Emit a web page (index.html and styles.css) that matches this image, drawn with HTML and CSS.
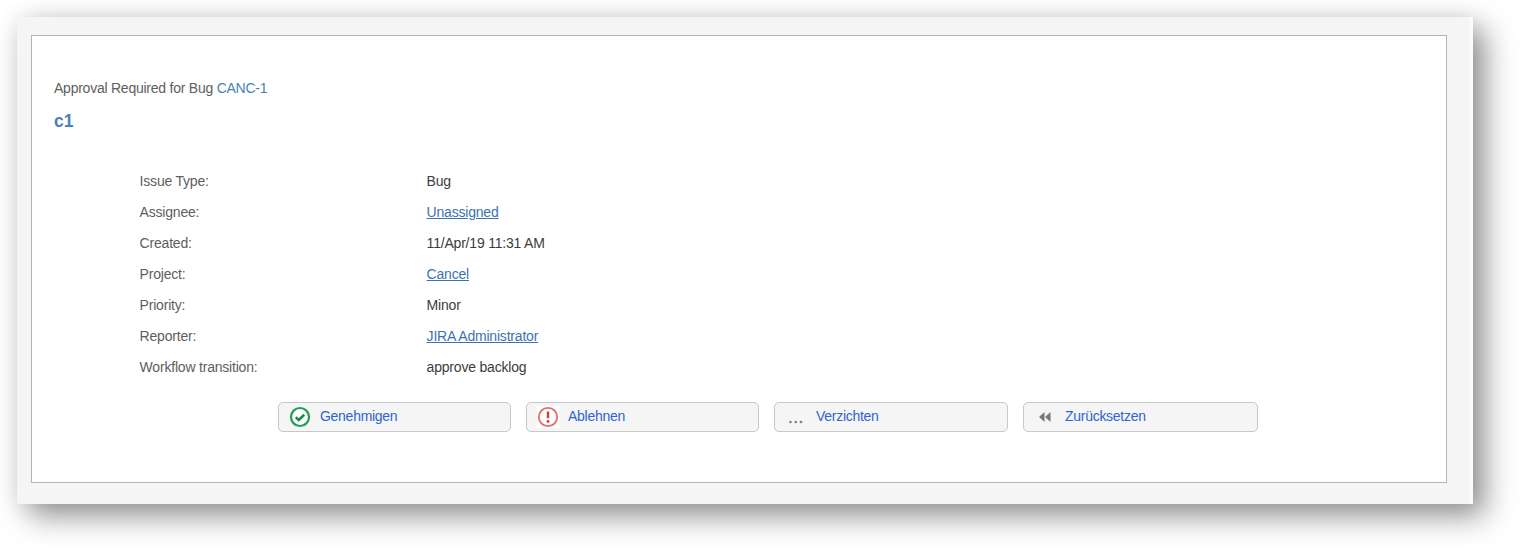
FILE: index.html
```html
<!DOCTYPE html>
<html lang="en">
<head>
<meta charset="utf-8">
<title>Approval Required</title>
<link rel="stylesheet" href="styles.css">
</head>
<body>
<div class="frame">
  <div class="card">
    <p class="lead">Approval Required for Bug <a class="plain" href="#">CANC-1</a></p>
    <h1 class="title"><a class="plain" href="#">c1</a></h1>
    <dl class="fields">
      <dt>Issue Type:</dt><dd>Bug</dd>
      <dt>Assignee:</dt><dd><a href="#">Unassigned</a></dd>
      <dt>Created:</dt><dd>11/Apr/19 11:31 AM</dd>
      <dt>Project:</dt><dd><a href="#">Cancel</a></dd>
      <dt>Priority:</dt><dd>Minor</dd>
      <dt>Reporter:</dt><dd><a href="#">JIRA Administrator</a></dd>
      <dt>Workflow transition:</dt><dd>approve backlog</dd>
    </dl>
    <div class="actions">
      <a class="btn btn-a" href="#">
        <svg class="icon" width="22" height="22" viewBox="0 0 22 22"><circle cx="11" cy="11" r="9" fill="#fff" stroke="#1f9d55" stroke-width="2.2"/><path d="M6.8 11.2l3 2.8 5.4-5.2" fill="none" stroke="#1b8a4b" stroke-width="2.6"/></svg>
        <span>Genehmigen</span>
      </a>
      <a class="btn btn-a" href="#">
        <svg class="icon" width="22" height="22" viewBox="0 0 22 22"><rect width="22" height="22" fill="#fff"/><circle cx="11" cy="11" r="9.2" fill="#fff" stroke="#e0706c" stroke-width="1.8"/><path d="M11 5.6v6.6" stroke="#cf3a36" stroke-width="2.4"/><circle cx="11" cy="15.4" r="1.4" fill="#cf3a36"/></svg>
        <span>Ablehnen</span>
      </a>
      <a class="btn btn-b" href="#">
        <svg class="icon" width="22" height="22" viewBox="0 0 22 22"><circle cx="5.5" cy="16" r="1.3" fill="#808080"/><circle cx="10.8" cy="16" r="1.3" fill="#808080"/><circle cx="16" cy="16" r="1.3" fill="#808080"/></svg>
        <span>Verzichten</span>
      </a>
      <a class="btn btn-c" href="#">
        <svg class="icon" width="22" height="22" viewBox="0 0 22 22"><path d="M10.5 6v10L5 11zM16.5 6v10L11 11z" fill="#777"/></svg>
        <span>Zurücksetzen</span>
      </a>
    </div>
  </div>
</div>
</body>
</html>
```
FILE: styles.css
```css
html, body {
  margin: 0;
  height: 552px;
  overflow: hidden;
  background: #fff;
  font-family: "Liberation Sans", Arial, sans-serif;
}
.frame {
  box-sizing: border-box;
  width: 1456px;
  height: 487px;
  margin: 17px 0 0 17px;
  padding: 18px 0 0 14px;
  background: #f5f5f5;
  border-right: 4px solid #fbfbfb;
  box-shadow: 12px 12px 28px rgba(0,0,0,.42), 0 0 22px rgba(0,0,0,.08);
}
.card {
  box-sizing: border-box;
  width: 1416px;
  height: 448px;
  background: #fff;
  border: 1px solid #b4b4b4;
  padding: 44px 22px 0;
}
.lead {
  margin: 0;
  font-size: 14px;
  line-height: 17px;
  letter-spacing: -.24px;
  color: #5e5e5e;
}
.plain { color: #4a7fb8; text-decoration: none; }
.title {
  margin: 14px 0 0;
  font-size: 17.5px;
  line-height: 20px;
  font-weight: 700;
}
.fields {
  display: grid;
  grid-template-columns: 287px 1fr;
  grid-auto-rows: 31px;
  margin: 35px 0 0 85.6px;
  font-size: 14px;
  line-height: 31px;
  letter-spacing: -.2px;
}
.fields dt { color: #5e5e5e; }
.fields dd { margin: 0; color: #3c3c3c; }
.fields a { color: #3b73af; text-decoration: underline; }
.actions {
  display: flex;
  gap: 15px;
  margin: 19px 0 0 224px;
}
.btn {
  box-sizing: border-box;
  display: flex;
  align-items: center;
  gap: 9px;
  width: 233px;
  height: 30px;
  padding: 0 0 3px 10px;
  background: #f5f5f5;
  border: 1px solid #c8c8c8;
  border-radius: 5px;
  color: #2f64d2;
  font-size: 14px;
  letter-spacing: -.28px;
  text-decoration: none;
}
.btn-b { width: 234px; }
.btn-c { width: 235px; }
.icon { flex: none; margin-top: 2px; }
```
